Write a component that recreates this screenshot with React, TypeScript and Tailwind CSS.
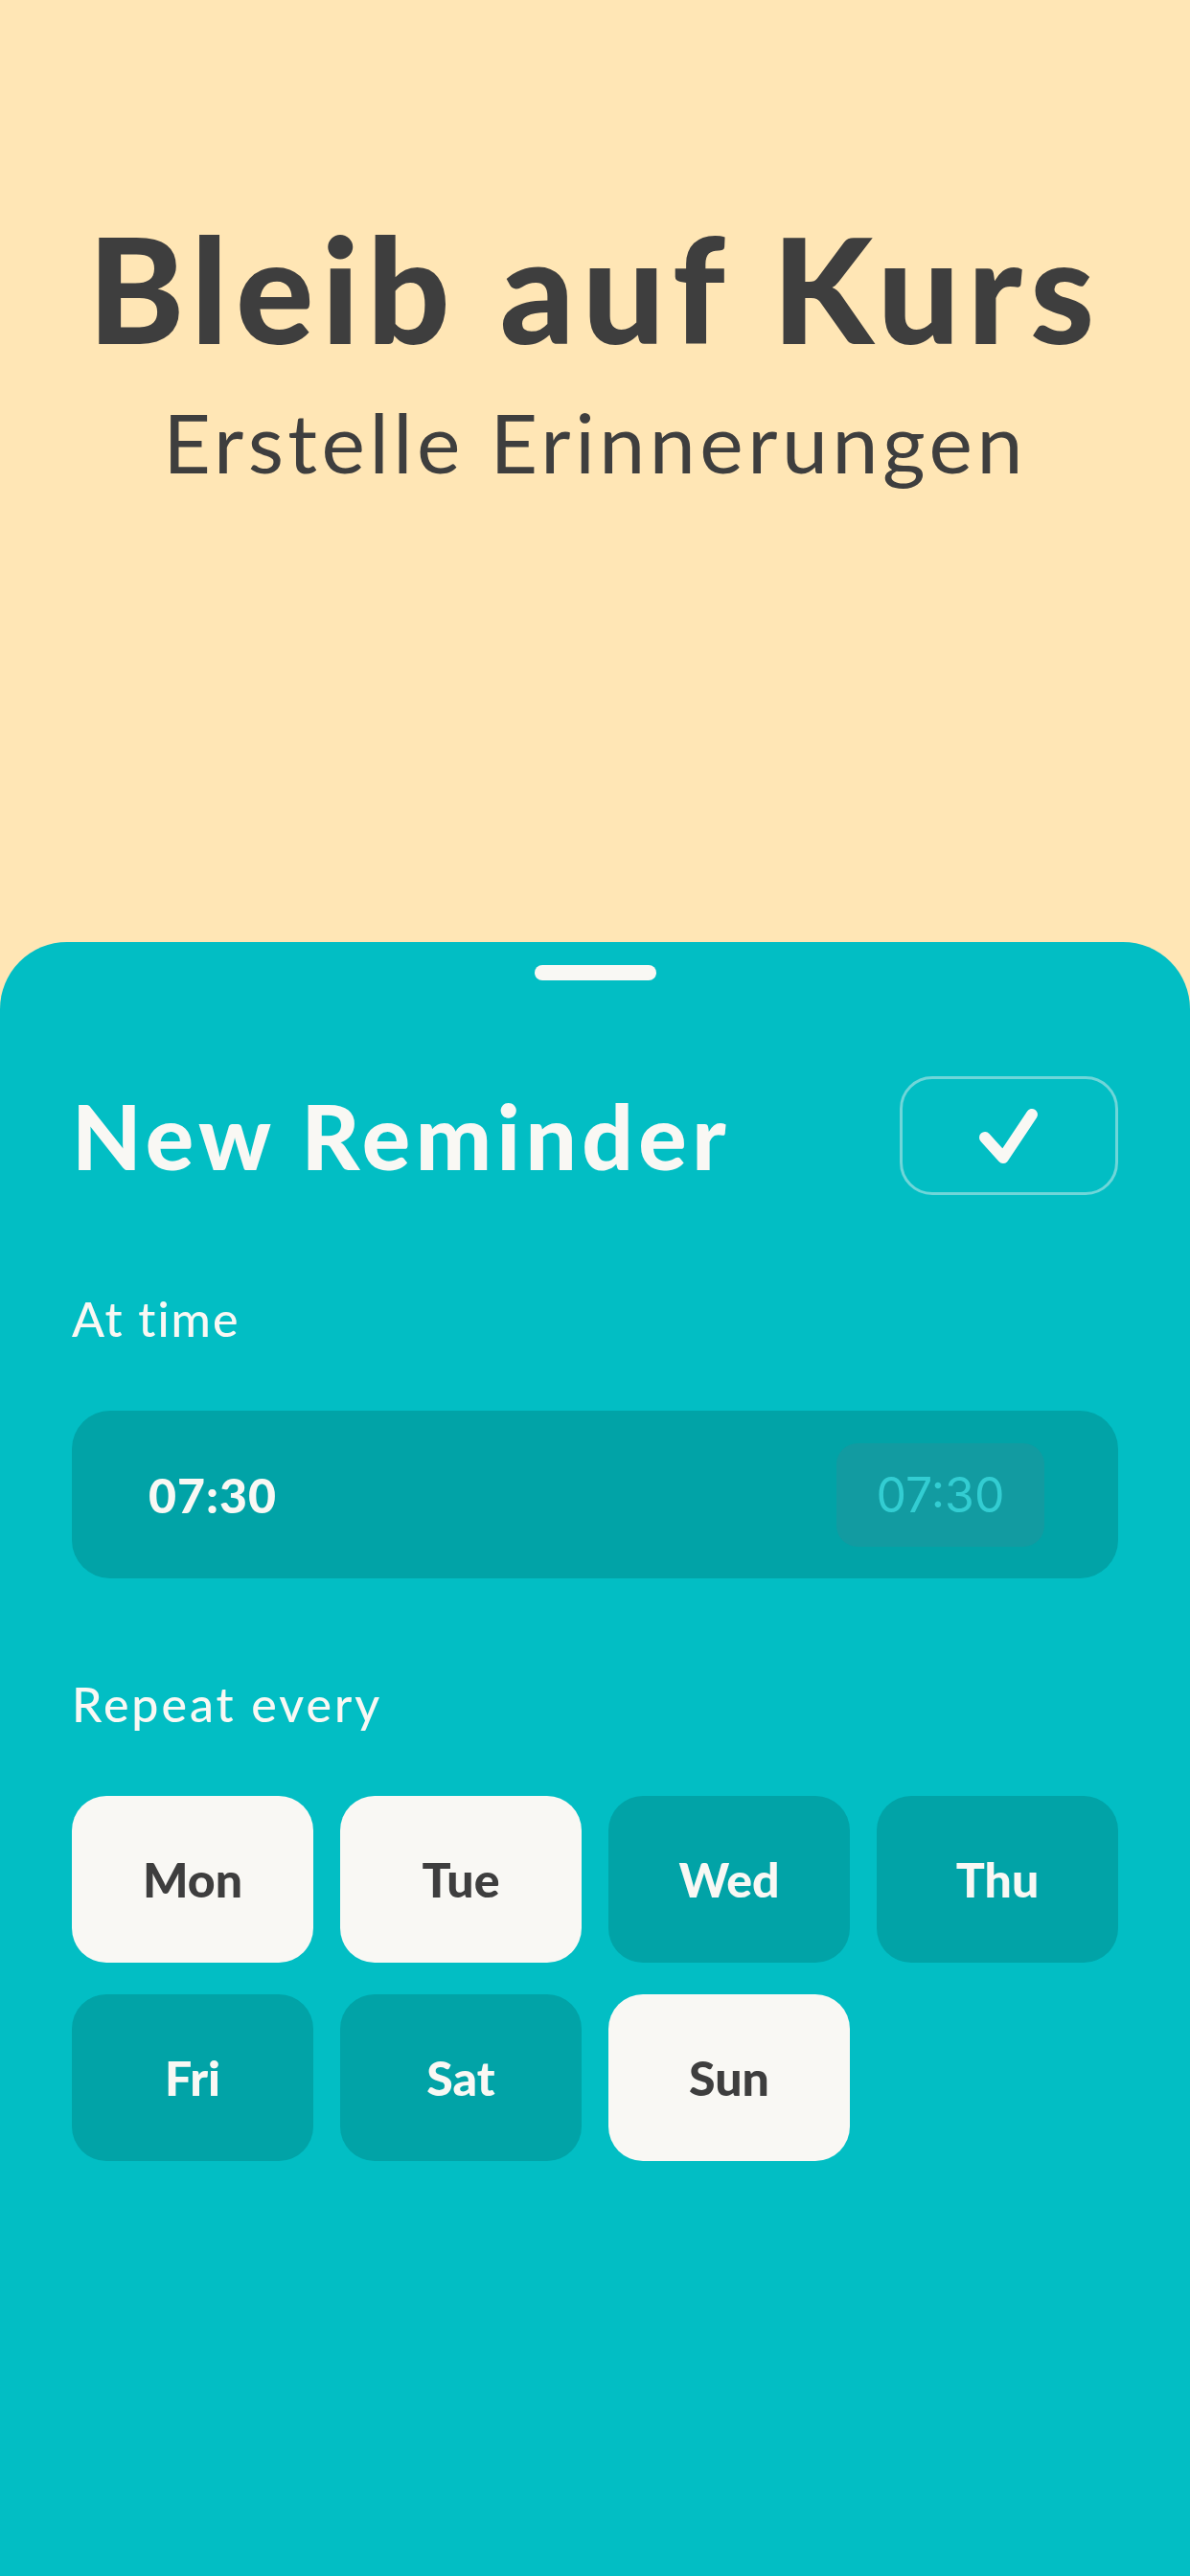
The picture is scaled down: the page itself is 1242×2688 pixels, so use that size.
const days = [
    { label: 'Mon', on: true },
    { label: 'Tue', on: true },
    { label: 'Wed', on: false },
    { label: 'Thu', on: false },
    { label: 'Fri', on: false },
    { label: 'Sat', on: false },
    { label: 'Sun', on: true },
]

export default function App() {
    return (
        <div className="w-[1242px] min-h-[2688px] flex flex-col bg-[#ffe6b5] font-['Lato','Open_Sans',sans-serif]">
            {/* Header */}
            <div className="h-[983px] flex flex-col items-center pt-[224px] text-[#3e3e3e]">
                <h1 className="text-[152px] leading-none font-black tracking-[8px]">Bleib auf Kurs</h1>
                <p className="mt-[42px] text-[86px] leading-none font-normal tracking-[4.5px]">Erstelle Erinnerungen</p>
            </div>

            {/* Sheet */}
            <div className="flex-1 bg-[#02bec4] rounded-t-[70px] px-[75px] flex flex-col">
                <div className="flex justify-center pt-[24px]">
                    <div className="w-[127px] h-[16px] rounded-full bg-[#f9f8f4]" />
                </div>

                <div className="mt-[100px] flex items-center justify-between">
                    <h2 className="text-[94px] leading-none font-black tracking-[5.5px] text-[#f9f8f4]">New Reminder</h2>
                    <button className="w-[228px] h-[124px] rounded-[34px] border-[3px] border-[#6fd6d9] flex items-center justify-center">
                        <svg width="70" height="70" viewBox="0 0 70 70" fill="none">
                            <polyline points="10,37 29,58 59,13" stroke="#f9f8f4" strokeWidth="12" strokeLinecap="round" strokeLinejoin="round" />
                        </svg>
                    </button>
                </div>

                <p className="mt-[104px] text-[50px] leading-none font-medium tracking-[2px] text-[#f9f8f4]">At time</p>

                <div className="mt-[71px] h-[175px] rounded-[40px] bg-[#01a3a7] flex items-center justify-between pl-[80px] pr-[77px]">
                    <span className="text-[50px] leading-none font-black tracking-[1px] text-[#f9f8f4]">07:30</span>
                    <div className="w-[217px] h-[108px] rounded-[22px] bg-[#129ba1] flex items-center justify-center">
                        <span className="font-['Inter',sans-serif] text-[50px] leading-none font-normal text-[#33cdd2]">07:30</span>
                    </div>
                </div>

                <p className="mt-[106px] text-[50px] leading-none font-medium tracking-[3px] text-[#f9f8f4]">Repeat every</p>

                <div className="mt-[71px] grid grid-cols-4 gap-x-[28px] gap-y-[33px]">
                    {days.map(d => (
                        <div
                            key={d.label}
                            className={d.on
                                ? 'h-[174px] rounded-[36px] bg-[#f9f8f4] flex items-center justify-center text-[50px] font-black text-[#3e3e3e]'
                                : 'h-[174px] rounded-[36px] bg-[#01a3a7] flex items-center justify-center text-[50px] font-black text-[#f9f8f4]'}
                        >
                            {d.label}
                        </div>
                    ))}
                </div>
            </div>
        </div>
    )
}
